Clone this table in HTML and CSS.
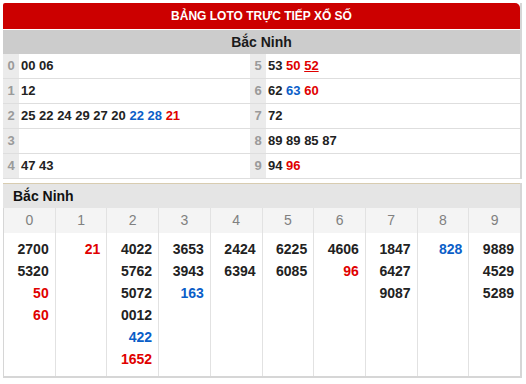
FILE: index.html
```html
<!DOCTYPE html>
<html lang="vi">
<head>
<meta charset="utf-8">
<link rel="stylesheet" href="styles.css">
</head>
<body>
<div class="page">
  <div class="loto">
    <div class="loto-title">BẢNG LOTO TRỰC TIẾP XỔ SỐ</div>
    <div class="loto-prov">Bắc Ninh</div>
    <div class="loto-grid">
      <div class="row"><span class="hd">0</span><span class="val">00 06</span><span class="hd">5</span><span class="val">53 <b class="r">50</b> <b class="r u">52</b></span></div>
      <div class="row"><span class="hd">1</span><span class="val">12</span><span class="hd">6</span><span class="val">62 <b class="b">63</b> <b class="r">60</b></span></div>
      <div class="row"><span class="hd">2</span><span class="val">25 22 24 29 27 20 <b class="b">22</b> <b class="b">28</b> <b class="r">21</b></span><span class="hd">7</span><span class="val">72</span></div>
      <div class="row"><span class="hd">3</span><span class="val"></span><span class="hd">8</span><span class="val">89 89 85 87</span></div>
      <div class="row"><span class="hd">4</span><span class="val">47 43</span><span class="hd">9</span><span class="val">94 <b class="r">96</b></span></div>
    </div>
  </div>

  <div class="dau">
    <div class="dau-title">Bắc Ninh</div>
    <div class="dau-grid">
      <div class="ch">0</div><div class="ch">1</div><div class="ch">2</div><div class="ch">3</div><div class="ch">4</div>
      <div class="ch">5</div><div class="ch">6</div><div class="ch">7</div><div class="ch">8</div><div class="ch">9</div>

      <div class="cell"><span>2700</span><span>5320</span><span class="r">50</span><span class="r">60</span></div>
      <div class="cell"><span class="r">21</span></div>
      <div class="cell"><span>4022</span><span>5762</span><span>5072</span><span>0012</span><span class="b">422</span><span class="r">1652</span></div>
      <div class="cell"><span>3653</span><span>3943</span><span class="b">163</span></div>
      <div class="cell"><span>2424</span><span>6394</span></div>
      <div class="cell"><span>6225</span><span>6085</span></div>
      <div class="cell"><span>4606</span><span class="r">96</span></div>
      <div class="cell"><span>1847</span><span>6427</span><span>9087</span></div>
      <div class="cell"><span class="b">828</span></div>
      <div class="cell"><span>9889</span><span>4529</span><span>5289</span></div>
    </div>
  </div>
</div>
</body>
</html>
```

FILE: styles.css
```css
* { box-sizing: border-box; }
html, body { margin: 0; padding: 0; background: #fff; }
body { font-family: "Liberation Sans", Arial, sans-serif; color: #222; }

.page { padding: 3px 0 0 3px; width: 522px; }

.loto {
  width: 519px;
  border-right: 2px solid #d6d6d6;
}
.loto-title {
  height: 26px;
  background: #cc0000;
  color: #fff;
  font-weight: bold;
  font-size: 12px;
  line-height: 26px;
  text-align: center;
  border-top-right-radius: 5px;
  border-top-left-radius: 2px;
}
.loto-prov {
  margin-top: 1px;
  height: 24px;
  background: #cccccc;
  font-weight: bold;
  font-size: 14px;
  line-height: 24px;
  text-align: center;
  color: #1a1a1a;
}
.loto-grid { display: flex; flex-direction: column; }
.row {
  display: grid;
  grid-template-columns: 16px 231px 16px 1fr;
  height: 25px;
  border-bottom: 1px solid #dedede;
  font-size: 13px;
  font-weight: bold;
  line-height: 24px;
}
.row .hd {
  background: #ebebeb;
  color: #9a9a9a;
  text-align: center;
  font-size: 13px;
}
.row .val { padding-left: 2px; background: #fff; }
.row .val b { font-weight: bold; }

.r { color: #e00000; }
.b { color: #0a5ec8; }
.u { text-decoration: underline; }

.dau {
  margin-top: 4px;
  width: 519px;
  border-right: 2px solid #d6d6d6;
  border-bottom: 2px solid #d6d6d6;
}
.dau-title {
  height: 25px;
  background: #e5e5e5;
  border-top: 1px solid #d8ccb0;
  font-weight: bold;
  font-size: 14px;
  line-height: 24px;
  padding-left: 10px;
  color: #111;
}
.dau-grid {
  display: grid;
  grid-template-columns: repeat(10, 1fr);
}
.ch {
  height: 25px;
  background: #f4f4f4;
  color: #808080;
  font-size: 14px;
  line-height: 25px;
  text-align: center;
  border-left: 1px solid #e2e2e2;
}
.ch:first-child, .cell:nth-child(11) { border-left: 1px solid #d6d6d6; }
.cell {
  display: flex;
  flex-direction: column;
  align-items: flex-end;
  padding: 5px 6px 6px 0;
  min-height: 143px;
  font-size: 14px;
  font-weight: bold;
  line-height: 22px;
  border-left: 1px solid #e2e2e2;
}
```
